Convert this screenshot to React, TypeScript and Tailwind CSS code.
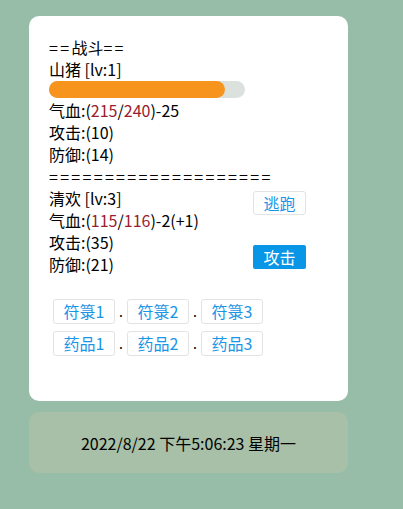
const font = { fontFamily: '"Microsoft YaHei", "Noto Sans CJK SC", sans-serif' };

const ItemButton = ({ label }: { label: string }) => (
  <button className="h-[25px] w-[62px] rounded-[3px] border border-[#e3e3e3] bg-white text-[16px] leading-[23px] text-[#1a96e6]">
    {label}
  </button>
);

const Dot = () => <span className="w-[12px] text-center text-[14px] leading-[25px] text-black">.</span>;

const Stat = ({ children }: { children: React.ReactNode }) => (
  <div className="h-[22px] leading-[22px]">{children}</div>
);

const Eq = ({ n }: { n: number }) => <span className="tracking-[2.3px]">{"=".repeat(n)}</span>;

export default function App() {
  const hp = 215;
  const maxHp = 240;

  return (
    <div className="min-h-[509px] w-full bg-[#97bca8] pt-[16px]" style={font}>
      <div className="ml-[29px] h-[385px] w-[319px] rounded-[10px] bg-white px-5 pt-[20px] text-[16px] text-black">
        <Stat>
          <Eq n={2} />战斗<Eq n={2} />
        </Stat>
        <Stat>山猪 [lv:1]</Stat>
        <div className="my-[1px] h-[17px] w-[196px] rounded-full bg-[#dbe2de]">
          <div
            className="h-full rounded-full bg-[#f7941d]"
            style={{ width: `${(hp / maxHp) * 100}%` }}
          />
        </div>
        <Stat>
          气血:(<span className="text-[#9a1c30]">215</span>/<span className="text-[#9a1c30]">240</span>)-25
        </Stat>
        <Stat>攻击:(10)</Stat>
        <Stat>防御:(14)</Stat>
        <Stat>
          <Eq n={20} />
        </Stat>
        <div className="flex">
          <div className="w-[204px]">
            <Stat>清欢 [lv:3]</Stat>
            <Stat>
              气血:(<span className="text-[#9a1c30]">115</span>/<span className="text-[#9a1c30]">116</span>)-2(+1)
            </Stat>
            <Stat>攻击:(35)</Stat>
            <Stat>防御:(21)</Stat>
          </div>
          <div className="flex flex-col pt-[4px]">
            <button className="h-[24px] w-[53px] rounded-[3px] border border-[#e3e3e3] bg-white text-[16px] leading-[22px] text-[#1a96e6]">
              逃跑
            </button>
            <button className="mt-[30px] h-[24px] w-[53px] rounded-[2px] bg-[#0a96e6] text-[16px] leading-[24px] text-white">
              攻击
            </button>
          </div>
        </div>
        <div className="mt-[24px] flex flex-col gap-[7px] pl-[4px]">
          <div className="flex">
            <ItemButton label="符箓1" />
            <Dot />
            <ItemButton label="符箓2" />
            <Dot />
            <ItemButton label="符箓3" />
          </div>
          <div className="flex">
            <ItemButton label="药品1" />
            <Dot />
            <ItemButton label="药品2" />
            <Dot />
            <ItemButton label="药品3" />
          </div>
        </div>
      </div>
      <div className="ml-[29px] mt-[11px] flex h-[61px] w-[319px] items-center justify-center rounded-[10px] bg-[#a8c0a7] text-[16px] text-black">
        2022/8/22 下午5:06:23 星期一
      </div>
    </div>
  );
}
